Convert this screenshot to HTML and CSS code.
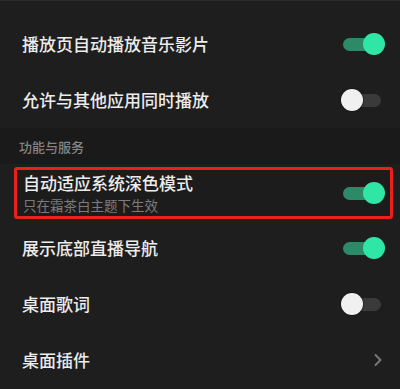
FILE: index.html
```html
<!DOCTYPE html>
<html lang="zh-CN">
<head>
<meta charset="utf-8">
<link rel="stylesheet" href="styles.css">
</head>
<body>
<div class="page">
  <div class="top-spacer"></div>
  <div class="row">
    <span class="title">播放页自动播放音乐影片</span>
    <span class="toggle on"><span class="track"></span><span class="knob"></span></span>
  </div>
  <div class="row">
    <span class="title">允许与其他应用同时播放</span>
    <span class="toggle off"><span class="track"></span><span class="knob"></span></span>
  </div>
  <div class="section">功能与服务</div>
  <div class="row highlight">
    <div class="texts">
      <span class="title">自动适应系统深色模式</span>
      <span class="sub">只在霜茶白主题下生效</span>
    </div>
    <span class="toggle on"><span class="track"></span><span class="knob"></span></span>
  </div>
  <div class="row">
    <span class="title">展示底部直播导航</span>
    <span class="toggle on"><span class="track"></span><span class="knob"></span></span>
  </div>
  <div class="row">
    <span class="title">桌面歌词</span>
    <span class="toggle off"><span class="track"></span><span class="knob"></span></span>
  </div>
  <div class="row">
    <span class="title">桌面插件</span>
    <svg class="chevron" width="10" height="14" viewBox="0 0 10 14"><path d="M2.5 2 L7.5 7 L2.5 12" fill="none" stroke="#777" stroke-width="2" stroke-linecap="round" stroke-linejoin="round"/></svg>
  </div>
</div>
</body>
</html>
```

FILE: styles.css
```css
* { box-sizing: border-box; }
html, body {
  margin: 0;
  padding: 0;
  background: #1e1e1e;
}
body {
  font-family: "Noto Sans CJK SC", "Noto Sans", sans-serif;
  width: 400px;
  height: 389px;
  overflow: hidden;
}
.page {
  display: flex;
  flex-direction: column;
}
.top-spacer {
  height: 16px;
  border-top: 1px solid #2a2a2a;
}
.row {
  height: 56px;
  display: flex;
  align-items: center;
  justify-content: space-between;
  padding: 0 15px 0 22px;
}
.title {
  font-size: 17px;
  line-height: 20px;
  font-weight: 500;
  color: #ececec;
}
.section {
  height: 36px;
  background: #1a1a1a;
  color: #858585;
  font-size: 13px;
  font-weight: 500;
  line-height: 36px;
  padding-left: 19px;
  padding-top: 1px;
}
.highlight {
  height: 52px;
  margin: 3px 7px 1px 14px;
  border: 3px solid #e8211d;
  border-radius: 3px;
  padding: 0 5px 0 6px;
  background: #1c1c1c;
}
.texts {
  display: flex;
  flex-direction: column;
}
.texts .sub {
  font-size: 13.5px;
  line-height: 17px;
  margin-top: 4px;
  font-weight: 400;
  color: #7c7c7c;
}
.toggle {
  position: relative;
  width: 44px;
  height: 22px;
  flex: none;
}
.track {
  position: absolute;
  left: 2px;
  top: 4.5px;
  width: 38px;
  height: 13px;
  border-radius: 7px;
}
.knob {
  position: absolute;
  top: 0;
  width: 22px;
  height: 22px;
  border-radius: 50%;
}
.on .track { background: #2c8a69; }
.on .knob { left: 22px; background: #2fe6a6; }
.off .track { background: #3a3a3a; }
.off .knob { left: 0; background: #f0f0f0; box-shadow: 0 0 2px rgba(0,0,0,0.8); }
.chevron {
  margin-right: 2px;
}
```
